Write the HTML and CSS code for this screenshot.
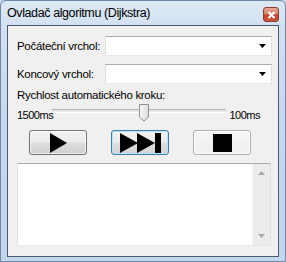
FILE: index.html
```html
<!DOCTYPE html>
<html>
<head>
<meta charset="utf-8">
<link rel="stylesheet" href="styles.css">
</head>
<body>
<div class="window">
  <div class="titlebar">
    <span class="title">Ovladač algoritmu (Dijkstra)</span>
    <span class="close"><svg width="9" height="8" viewBox="0 0 9 8"><path d="M1.5 1 L7.5 7 M7.5 1 L1.5 7" stroke="#fff" stroke-width="2"/></svg></span>
  </div>
  <div class="client">
    <div class="row first">
      <span class="label">Počáteční vrchol:</span>
      <div class="combo"><svg class="arrow" width="7" height="4" viewBox="0 0 7 4"><path d="M0 0 H7 L3.5 4 Z" fill="#000"/></svg></div>
    </div>
    <div class="row second">
      <span class="label">Koncový vrchol:</span>
      <div class="combo"><svg class="arrow" width="7" height="4" viewBox="0 0 7 4"><path d="M0 0 H7 L3.5 4 Z" fill="#000"/></svg></div>
    </div>
    <div class="speed-label">Rychlost automatického kroku:</div>
    <div class="slider-row">
      <span class="val min">1500ms</span>
      <div class="track">
        <svg class="thumb" width="11" height="18" viewBox="0 0 11 18"><defs><linearGradient id="tg" x1="0" y1="0" x2="1" y2="0"><stop offset="0" stop-color="#f7f7f7"/><stop offset="1" stop-color="#dedede"/></linearGradient></defs><path d="M0.5 0.5 H9.5 V13 L5 17 L0.5 13 Z" fill="url(#tg)" stroke="#8f8f8f"/></svg>
      </div>
      <span class="val max">100ms</span>
    </div>
    <div class="buttons">
      <div class="btn"><svg width="17" height="20" viewBox="0 0 17 20"><path d="M0 0 L17 10 L0 20 Z" fill="#000"/></svg></div>
      <div class="btn default"><svg width="41" height="20" viewBox="0 0 41 20"><path d="M0 0 L18 10 L0 20 Z M17 0 L35 10 L17 20 Z" fill="#000"/><rect x="35" y="0" width="6" height="20" fill="#000"/></svg></div>
      <div class="btn light"><svg width="19" height="18" viewBox="0 0 19 18"><rect width="19" height="18" fill="#000"/></svg></div>
    </div>
    <div class="log">
      <div class="scrollbar">
        <svg width="7" height="4" viewBox="0 0 7 4"><path d="M0 4 H7 L3.5 0 Z" fill="#a8a8a8"/></svg>
        <svg width="7" height="4" viewBox="0 0 7 4"><path d="M0 0 H7 L3.5 4 Z" fill="#a8a8a8"/></svg>
      </div>
    </div>
  </div>
</div>
</body>
</html>
```
FILE: styles.css
```css
html, body {
  margin: 0;
  padding: 0;
  background: #c4d7ee;
}
body {
  font-family: "Liberation Sans", Arial, sans-serif;
  font-size: 11.5px;
  letter-spacing: -0.3px;
  color: #000;
}
.window {
  width: 286px;
  height: 262px;
  box-sizing: border-box;
  border: 1px solid #6f88a6;
  border-radius: 6px 6px 0 0;
  background: linear-gradient(#dde8f5 0px, #d2e1f2 24px, #c6d8ee 120px, #c1d5ed 262px);
  padding: 0 6px 4px 6px;
  display: flex;
  flex-direction: column;
}
.titlebar {
  height: 24px;
  display: flex;
  align-items: flex-start;
  justify-content: space-between;
  flex: none;
}
.title {
  font-size: 12.5px;
  letter-spacing: -0.4px;
  line-height: 15px;
  margin-top: 5px;
  white-space: nowrap;
}
.close {
  width: 16px;
  height: 15px;
  box-sizing: border-box;
  margin-top: 6px;
  border: 1px solid #8a3a30;
  border-radius: 3px;
  background: linear-gradient(#e8a597 0%, #d9806e 45%, #c5432c 55%, #c9573f 100%);
  display: flex;
  align-items: center;
  justify-content: center;
}
.client {
  flex: 1;
  border: 1px solid #4a5a70;
  background: #f0f0f0;
  padding: 0 6px 0 9px;
  display: flex;
  flex-direction: column;
}
.row {
  display: flex;
  align-items: center;
  height: 20px;
}
.row.first { margin-top: 10px; }
.row.second { margin-top: 8px; }
.label {
  line-height: 14px;
  white-space: nowrap;
  flex: none;
}
.combo {
  margin-left: auto;
  width: 167px;
  flex: none;
  height: 20px;
  box-sizing: border-box;
  border: 1px solid;
  border-color: #abadb3 #dbdfe6 #e3e9ef #e2e3ea;
  background: #fff;
  display: flex;
  align-items: center;
  justify-content: flex-end;
  padding-right: 5px;
}
.speed-label {
  margin-top: 4px;
  line-height: 14px;
  white-space: nowrap;
}
.slider-row {
  display: flex;
  height: 18px;
  margin-top: 2px;
}
.val {
  font-size: 11px;
  letter-spacing: -0.5px;
  line-height: 14px;
  margin-top: 4px;
  white-space: nowrap;
  flex: none;
}
.val.min {
  width: 35px;
}
.val.max {
  margin-right: 12px;
  margin-left: 3px;
}
.track {
  position: relative;
  flex: 1;
  height: 2px;
  margin: 5px 0 0 0;
  border-top: 1px solid #b4b4b4;
  background: #e8e8e8;
  border-bottom: 1px solid #fff;
}
.thumb {
  position: absolute;
  left: 87px;
  top: -6px;
}
.buttons {
  display: flex;
  gap: 24px;
  margin-top: 8px;
  margin-left: 12px;
}
.btn {
  width: 58px;
  height: 25px;
  box-sizing: border-box;
  border: 1px solid #707070;
  border-radius: 3px;
  background: linear-gradient(#f2f2f2 0%, #ebebeb 45%, #dddddd 55%, #cfcfcf 100%);
  box-shadow: inset 0 0 0 1px rgba(255, 255, 255, 0.7);
  display: flex;
  align-items: center;
  justify-content: center;
}
.btn.default {
  border-color: #3c7fb1;
  box-shadow: inset 0 0 0 1px #b9e4f8;
  background: linear-gradient(#f3f3f3 0%, #ececec 45%, #dedede 55%, #d2d2d2 100%);
}
.btn.light {
  border-color: #adb2b5;
  background: linear-gradient(#f6f6f6, #f2f2f2 50%, #eeeeee);
}
.log {
  margin-top: 8px;
  margin-right: 1px;
  height: 83px;
  box-sizing: border-box;
  border: 1px solid;
  border-color: #abadb3 #dbdfe6 #e3e9ef #e2e3ea;
  background: #fff;
  display: flex;
  justify-content: flex-end;
}
.scrollbar {
  width: 17px;
  background: #ececec;
  border-left: 1px solid #f6f6f6;
  display: flex;
  flex-direction: column;
  align-items: center;
  justify-content: space-between;
  padding: 7px 0 7px 0;
}
```
